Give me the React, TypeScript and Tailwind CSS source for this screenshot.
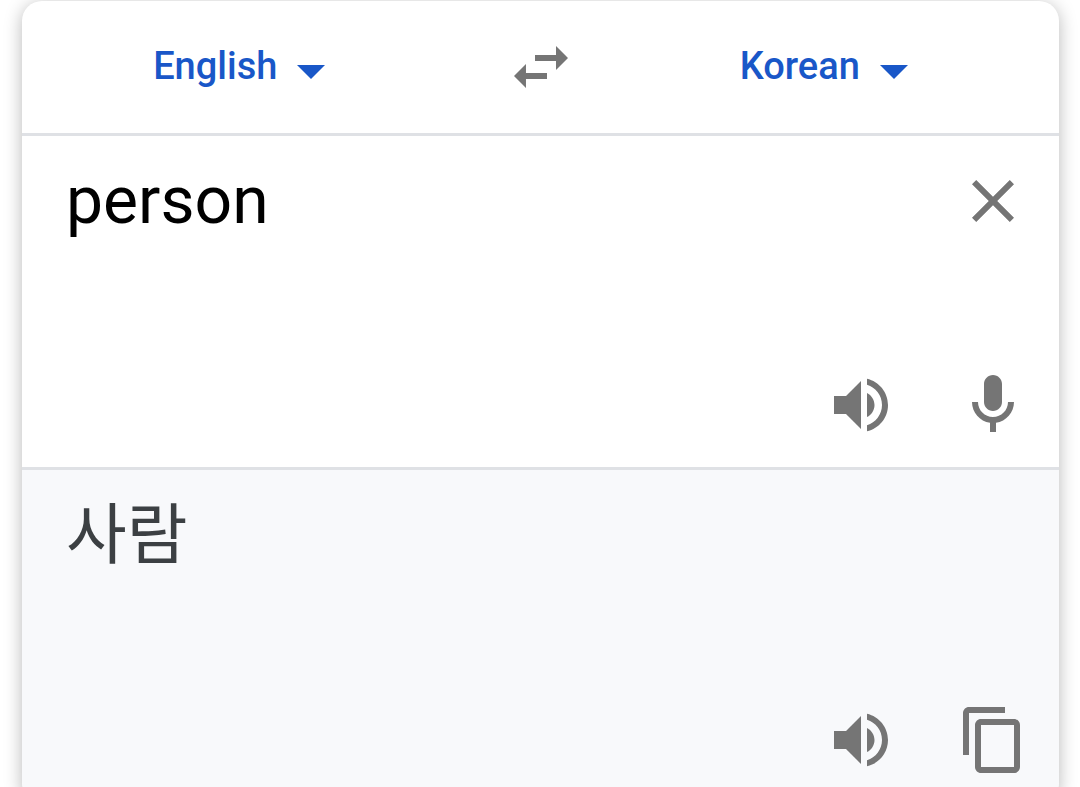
import { useState } from "react";

const ICONS = {
  swap: "M6.99 11L3 15l3.99 4v-3H14v-2H6.99v-3zM21 9l-3.99-4v3H10v2h7.01v3L21 9z",
  close:
    "M19 6.41L17.59 5 12 10.59 6.41 5 5 6.41 10.59 12 5 17.59 6.41 19 12 13.41 17.59 19 19 17.59 13.41 12z",
  speaker:
    "M3 9v6h4l5 5V4L7 9H3zm13.5 3c0-1.77-1.02-3.29-2.5-4.03v8.05c1.48-.73 2.5-2.25 2.5-4.02zM14 3.23v2.06c2.89.86 5 3.54 5 6.71s-2.11 5.85-5 6.71v2.06c4.01-.91 7-4.49 7-8.77s-2.99-7.86-7-8.77z",
  mic: "M12 14c1.66 0 3-1.34 3-3V5c0-1.66-1.34-3-3-3S9 3.34 9 5v6c0 1.66 1.34 3 3 3zM17 11c0 2.76-2.24 5-5 5s-5-2.24-5-5H5c0 3.53 2.61 6.43 6 6.92V21h2v-3.08c3.39-.49 6-3.39 6-6.92h-2z",
  copy: "M16 1H4c-1.1 0-2 .9-2 2v14h2V3h12V1zm3 4H8c-1.1 0-2 .9-2 2v14c0 1.1.9 2 2 2h11c1.1 0 2-.9 2-2V7c0-1.1-.9-2-2-2zm0 16H8V7h11v14z",
};

const LANGUAGES = ["English", "Korean"];

const TRANSLATIONS: Record<string, string> = {
  person: "사람",
};

interface IconButtonProps {
  icon: keyof typeof ICONS;
  label: string;
  onClick?: () => void;
}

function IconButton({ icon, label, onClick }: IconButtonProps) {
  return (
    <button
      type="button"
      aria-label={label}
      onClick={onClick}
      className="size-[72px] shrink-0 cursor-pointer text-[#757575]"
    >
      <svg viewBox="0 0 24 24" fill="currentColor" className="size-full">
        <path d={ICONS[icon]} />
      </svg>
    </button>
  );
}

interface LanguageSelectProps {
  label: string;
  value: string;
  onChange: (value: string) => void;
}

function LanguageSelect({ label, value, onChange }: LanguageSelectProps) {
  return (
    <div className="relative pb-0.5 text-[#1957c8]">
      <select
        aria-label={label}
        value={value}
        onChange={(e) => onChange(e.target.value)}
        className="cursor-pointer appearance-none bg-transparent pr-12 text-[38px] leading-[48px] font-medium outline-none [field-sizing:content]"
      >
        {LANGUAGES.map((language) => (
          <option key={language}>{language}</option>
        ))}
      </select>
      <svg
        viewBox="0 0 28 14"
        fill="currentColor"
        className="pointer-events-none absolute right-0 bottom-[13px] h-[14px] w-7"
      >
        <path d="M0 0h28L14 14z" />
      </svg>
    </div>
  );
}

export default function App() {
  const [source, setSource] = useState("English");
  const [target, setTarget] = useState("Korean");
  const [text, setText] = useState("person");

  const handleSwap = () => {
    setSource(target);
    setTarget(source);
  };

  return (
    <main className="min-h-screen bg-white pt-px pr-[21px] pl-[22px] font-['Roboto','Noto_Sans_CJK_KR',sans-serif]">
      <div className="overflow-hidden rounded-[20px] bg-white shadow-[0_3px_18px_rgba(0,0,0,0.28)]">
        <header className="grid h-[135px] grid-cols-[1fr_72px_1fr] items-center border-b-3 border-[#dfe1e5]">
          <div className="flex justify-center pr-12">
            <LanguageSelect label="Source language" value={source} onChange={setSource} />
          </div>
          <IconButton icon="swap" label="Swap languages" onClick={handleSwap} />
          <div className="flex justify-center pl-3">
            <LanguageSelect label="Target language" value={target} onChange={setTarget} />
          </div>
        </header>

        <section className="flex min-h-[334px] flex-col justify-between border-b-3 border-[#dfe1e5] pt-[25px] pr-[30px] pb-[26px] pl-11">
          <div className="flex items-start">
            <textarea
              aria-label="Source text"
              rows={1}
              value={text}
              onChange={(e) => setText(e.target.value)}
              className="min-w-0 flex-1 resize-none overflow-hidden text-[66px] leading-[80px] text-black outline-none"
            />
            <div className="pt-1">
              <IconButton icon="close" label="Clear source text" onClick={() => setText("")} />
            </div>
          </div>
          <div className="flex justify-end gap-15">
            <IconButton icon="speaker" label="Listen to source text" />
            <IconButton icon="mic" label="Translate by voice" />
          </div>
        </section>

        <section className="flex min-h-[332px] flex-col justify-between bg-[#f8f9fb] pt-[26px] pr-[30px] pb-[26px] pl-11">
          <p lang="ko" className="min-h-20 text-[66px] leading-[80px] text-[#3c4043]">
            {TRANSLATIONS[text.trim().toLowerCase()] ?? text}
          </p>
          <div className="flex justify-end gap-15">
            <IconButton icon="speaker" label="Listen to translation" />
            <IconButton icon="copy" label="Copy translation" />
          </div>
        </section>
      </div>
    </main>
  );
}
